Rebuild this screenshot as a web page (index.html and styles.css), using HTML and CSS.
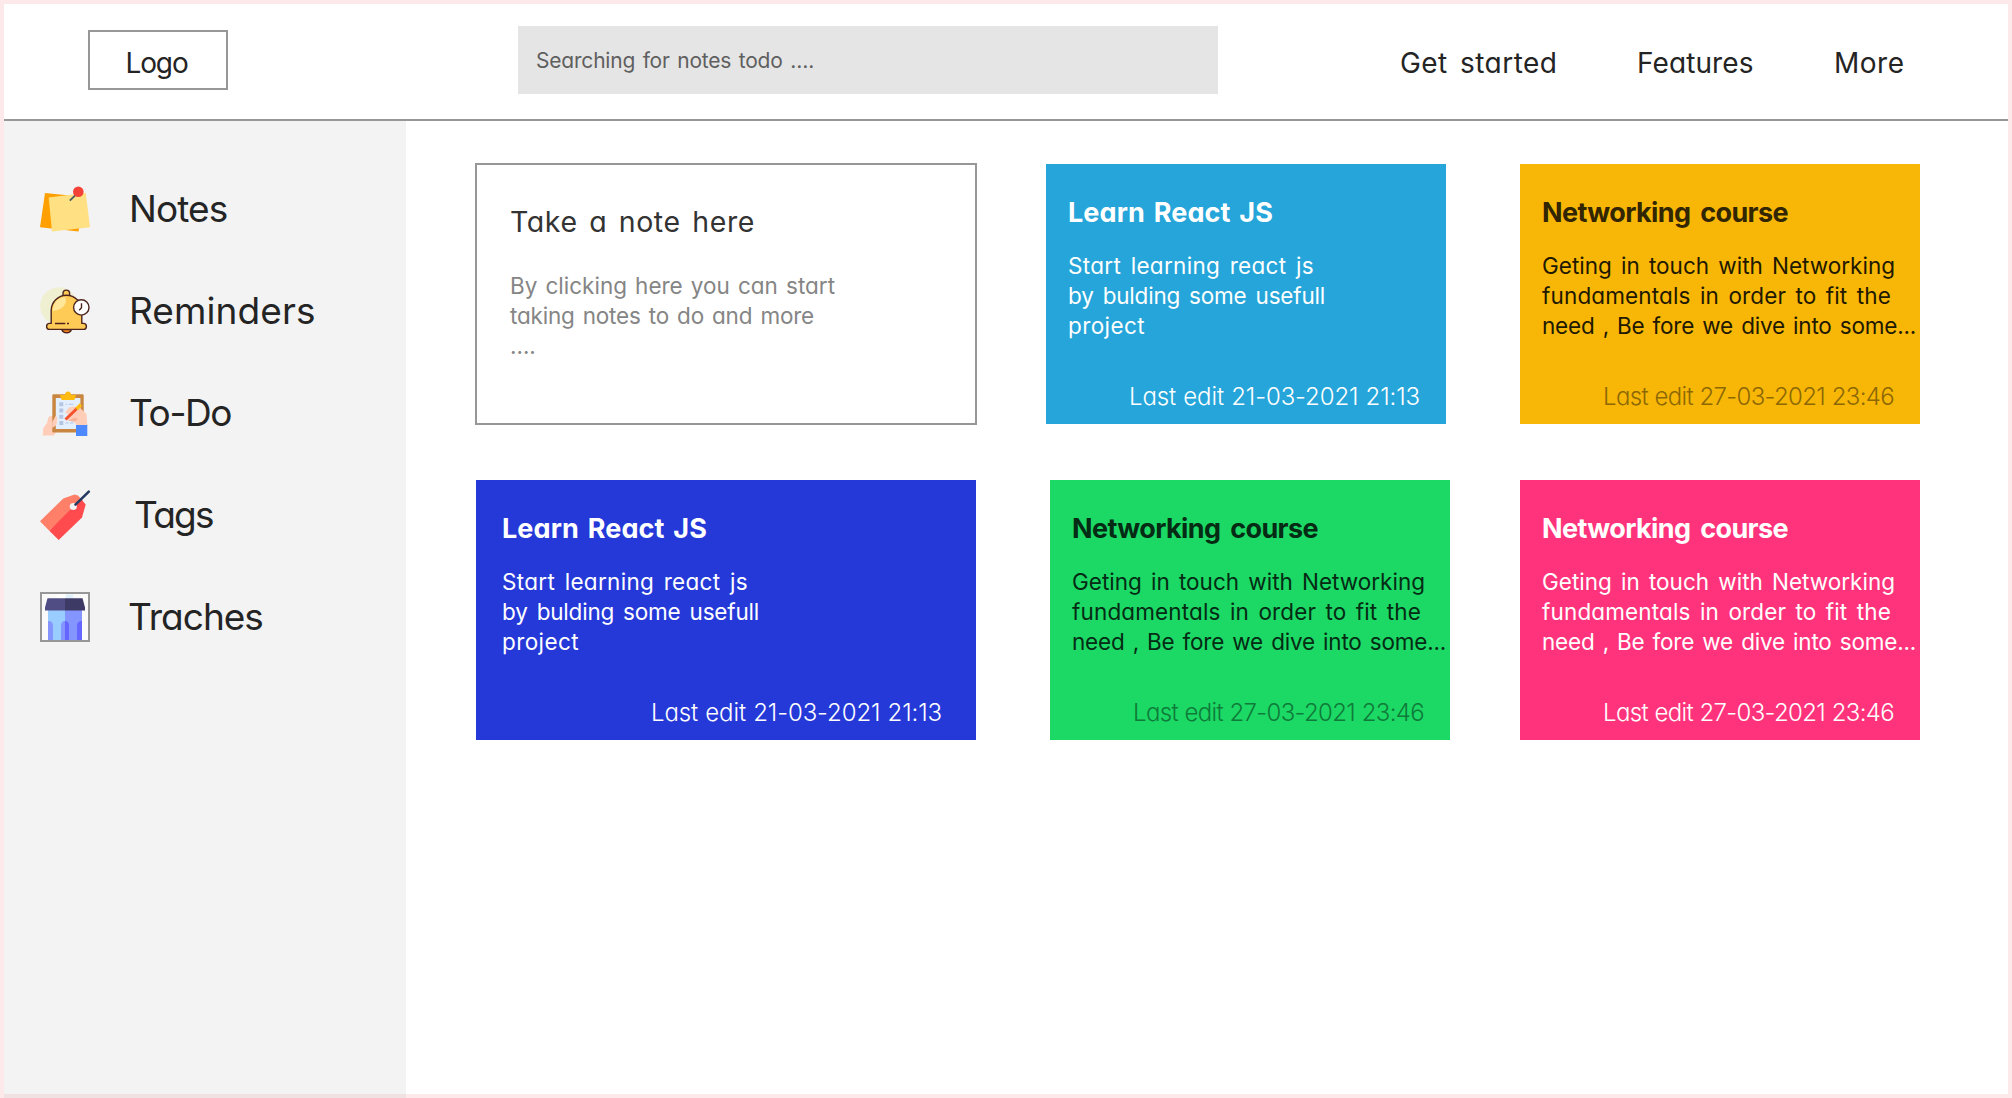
FILE: index.html
```html
<!DOCTYPE html>
<html lang="en">
<head>
<meta charset="utf-8">
<title>Notes</title>
<link rel="stylesheet" href="styles.css">
</head>
<body>
<div class="page">
  <header class="header">
    <a class="logo">Logo</a>
    <div class="search"><span class="line w-search">Searching for notes todo ….</span></div>
    <nav class="nav">
      <a class="nav-start">Get started</a>
      <a class="nav-features">Features</a>
      <a class="nav-more">More</a>
    </nav>
  </header>
  <div class="body">
    <aside class="sidebar">
      <a class="item">
        <svg class="icon" viewBox="0 0 50 50">
          <path fill="#ffa000" d="M5 9 45 13 38.5 47.4 0 43.3z"/>
          <path fill="#ffe082" d="M8.7 13.4 45.7 8.8 50 43.2 12 47.4z"/>
          <path stroke="#455a64" stroke-width="1.8" d="M29.8 16.6 37 9.6"/>
          <circle cx="38.3" cy="7.7" r="5.3" fill="#f44336"/>
        </svg>
        <span class="label l-notes">Notes</span>
      </a>
      <a class="item">
        <svg class="icon" viewBox="0 0 50 50">
          <circle cx="19" cy="20" r="18.8" fill="#eff0d2"/>
          <g stroke="#4c241d" stroke-width="1.4" stroke-linejoin="round">
            <path fill="#f58220" d="M21.8 43.5a5 4.6 0 0 0 9.6 0z"/>
            <path fill="#ffcb57" d="M23 9V7.4a3.3 3.3 0 0 1 6.6 0V9"/>
            <path fill="#ffcb57" d="M11.2 37.4V24.5a15.3 15.3 0 0 1 30.6 0v12.9h1.6a2.9 2.9 0 0 1 0 6H9.6a2.9 2.9 0 0 1 0-6z"/>
            <path fill="none" d="M15 37.5h10.3M27 37.5h2"/>
            <circle cx="41.3" cy="21.4" r="7.7" fill="#fff"/>
            <path fill="none" d="M41.5 17.3v4.4l-2.3 2.5"/>
          </g>
          <path fill="#ffe699" d="M13 25c-.5-7 4-13.500 12-14 3 5-1 13-12 14z"/>
        </svg>
        <span class="label l-reminders">Reminders</span>
      </a>
      <a class="item">
        <svg class="icon" viewBox="0 0 50 50">
          <path fill="#ffcdb8" d="M2.700 47.500 3.300 40 7 35 8.500 29 14 27 17 30 17 42 14 47.500z"/>
          <rect x="12.300" y="6.300" width="31.400" height="38.200" rx="1.200" fill="#c88640"/>
          <rect x="15.800" y="10" width="24.600" height="31" fill="#e4effd"/>
          <path fill="#ffbb10" d="M20 7h5a3 3.600 0 0 1 6 0h5l-1.500 5h-13z"/>
          <g fill="#b4c5e4">
            <path d="M19.300 14.200h4v4h-4zM19.300 20.500h4v4h-4zM19.300 26.700h4v4h-4zM19.300 33h4v4h-4z"/>
            <path d="M25.500 15.700h1.500v1h-1.500zM28.500 15.700h5v1h-5zM25.500 34.500h3v1h-3zM30 34.500h3.500v1h-3.500z"/>
          </g>
          <path fill="#ffcdb8" d="M12.300 34 15.500 28 17.500 29.500 16.500 37 12.300 40z"/>
          <path fill="#ffcdb8" d="M25 24.500 29 19.500 34 18.500 40 20 46.500 26 47.300 37H36.500L34 33.500 28 32.500 27.500 30.500 31 28z"/>
          <path fill="#f5b39b" d="M28 32.500 35 29.500 38 31 34.500 33.700z"/>
          <path stroke="#f4512c" stroke-width="3" d="M25.500 31.500 37 20.500"/>
          <path stroke="#ffbb10" stroke-width="3.600" d="M36.500 21 41 16.600"/>
          <rect x="36" y="37" width="11.300" height="11" fill="#4d88ff"/>
        </svg>
        <span class="label l-todo">To-Do</span>
      </a>
      <a class="item">
        <svg class="icon" viewBox="0 0 50 50">
          <path fill="#ff7f68" d="M0 31.300 23.300 8.400 34.500 4.600 38 5.500 43 11 9.300 40.700z"/>
          <path fill="#ff4b4e" d="M9.300 40.700 41 9 45.700 14.500 42 27.500 18.700 50z"/>
          <circle cx="33.300" cy="16.500" r="3.600" fill="#f3f3f3"/>
          <path stroke="#243a60" stroke-width="2.600" stroke-linecap="round" d="M35.500 14.600 48.800 1.600"/>
        </svg>
        <span class="label l-tags">Tags</span>
      </a>
      <a class="item">
        <svg class="icon boxed" viewBox="2 2 46 46">
          <path fill="#fff" d="M2 2h46v46H2z" opacity=".55"/>
          <path fill="#fff" d="M16.500 2.500h9.500V6.500h-9.500z"/>
          <path fill="#dff1fa" d="M26 2.500h7V6.500h-7z"/>
          <path fill="#99ccff" d="M8 18h17v30H8z"/>
          <path fill="#8495ff" d="M25 18h17v30H25z"/>
          <path fill="#8495ff" d="M8 29q5 0 5 5v14H8zM25 29q-4 0-4 5v14h4z"/>
          <path fill="#6565ff" d="M25 29q4 0 4 5v14h-4zM42 29q-5 0-5 5v14h5z"/>
          <path fill="#504d84" d="M7.500 6.300H25v12.200H5v-3z"/>
          <path fill="#3d3a66" d="M25 6.300h17.500L45 15.500v3H25z"/>
        </svg>
        <span class="label l-traches">Traches</span>
      </a>
    </aside>
    <main class="main">
      <div class="row">
        <section class="card take">
          <h2 class="title"><span class="line w-take">Take a note here</span></h2>
          <p class="text">
            <span class="line w-by">By clicking here you can start</span>
            <span class="line w-taking">taking notes to do and more</span>
            <span class="line">….</span>
          </p>
        </section>
        <section class="card sky">
          <h2 class="title"><span class="line w-react">Learn React JS</span></h2>
          <p class="text">
            <span class="line w-start">Start learning react js</span>
            <span class="line w-build">by bulding some usefull</span>
            <span class="line last">project</span>
          </p>
          <time class="edit e-1">Last edit 21-03-2021 21:13</time>
        </section>
        <section class="card amber">
          <h2 class="title"><span class="line w-net">Networking course</span></h2>
          <p class="text">
            <span class="line w-geting">Geting in touch with Networking</span>
            <span class="line w-fund">fundamentals in order to fit the</span>
            <span class="line w-need">need , Be fore we dive into some...</span>
          </p>
          <time class="edit e-2">Last edit 27-03-2021 23:46</time>
        </section>
      </div>
      <div class="row second">
        <section class="card blue">
          <h2 class="title"><span class="line w-react">Learn React JS</span></h2>
          <p class="text">
            <span class="line w-start">Start learning react js</span>
            <span class="line w-build">by bulding some usefull</span>
            <span class="line last">project</span>
          </p>
          <time class="edit e-1">Last edit 21-03-2021 21:13</time>
        </section>
        <section class="card green">
          <h2 class="title"><span class="line w-net">Networking course</span></h2>
          <p class="text">
            <span class="line w-geting">Geting in touch with Networking</span>
            <span class="line w-fund">fundamentals in order to fit the</span>
            <span class="line w-need">need , Be fore we dive into some...</span>
          </p>
          <time class="edit e-2">Last edit 27-03-2021 23:46</time>
        </section>
        <section class="card pink">
          <h2 class="title"><span class="line w-net">Networking course</span></h2>
          <p class="text">
            <span class="line w-geting">Geting in touch with Networking</span>
            <span class="line w-fund">fundamentals in order to fit the</span>
            <span class="line w-need">need , Be fore we dive into some...</span>
          </p>
          <time class="edit e-2">Last edit 27-03-2021 23:46</time>
        </section>
      </div>
    </main>
  </div>
</div>
</body>
</html>
```

FILE: styles.css
```css
* { box-sizing: border-box; }

body {
  margin: 0;
  background: #fff;
  color: #242424;
  font-family: Inter, sans-serif;
  font-feature-settings: "cv11"; /* single-storey a */
}

.page {
  display: flex;
  flex-direction: column;
  height: 1098px;
  border: 4px solid #fde9e9;
  border-bottom: 0;
}

/* Header */
.header {
  display: flex;
  align-items: center;
  flex: none;
  height: 117px;
  padding: 0 0 3px 84px;
  border-bottom: 2px solid #979797;
}
.logo {
  display: flex;
  align-items: center;
  justify-content: center;
  width: 140px;
  height: 60px;
  padding: 5px 3px 0 0;
  border: 2px solid #979797;
  font-size: 28px;
  letter-spacing: -1.1px;
}
.search {
  display: flex;
  align-items: center;
  width: 700px;
  height: 68px;
  margin-left: 290px;
  padding: 1px 0 0 18px;
  background: #e5e5e5;
  color: #5f5f5f;
  font-size: 21px;
  letter-spacing: -0.2px;
}
.nav {
  display: flex;
  margin: 6px 0 0 182px;
  font-size: 28px;
  white-space: nowrap;
}
.nav a { flex: none; }
.nav-start { width: 237px; letter-spacing: 0.45px; word-spacing: 4px; }
.nav-features { width: 197px; letter-spacing: 0.1px; }
.nav-more { letter-spacing: 0.5px; }

/* A text line stretched to its own measure */
.line {
  display: block;
  white-space: nowrap;
}
.line[class*="w-"] { text-align-last: justify; white-space: normal; }
.w-search { width: 278px; }
.w-take { width: 245px; letter-spacing: 0.6px; }
.w-by { width: 325px; letter-spacing: 0; }
.w-taking { width: 304px; }
.w-react { width: 205px; letter-spacing: 0.1px; }
.w-start { width: 246px; letter-spacing: 0.3px; }
.w-build { width: 257px; }
.w-net { width: 246px; }
.w-geting { width: 353px; letter-spacing: 0; }
.w-fund { width: 349px; letter-spacing: 0.15px; }
.w-need { width: 374px; }
.last { letter-spacing: 0.4px; }

.body { display: flex; flex: 1; }

/* Sidebar */
.sidebar {
  display: flex;
  flex-direction: column;
  gap: 52px;
  flex: none;
  width: 402px;
  padding: 63px 0 0 36px;
  background: #f3f3f3;
  border-bottom: 4px solid #f0e2e2;
}
.item { display: flex; align-items: center; height: 50px; }
.icon { flex: none; width: 50px; height: 50px; fill: none; overflow: visible; }
.boxed { border: 2px solid #979797; overflow: hidden; }
.label { font-size: 37px; line-height: 50px; }
.l-notes { margin-left: 39px; letter-spacing: -0.9px; }
.l-reminders { margin-left: 39px; letter-spacing: 0.1px; }
.l-todo { margin-left: 39px; letter-spacing: -1.4px; }
.l-tags { margin-left: 44px; letter-spacing: -1.8px; }
.l-traches { margin-left: 38px; letter-spacing: -1px; }

/* Notes */
.main {
  flex: 1;
  padding: 42px 0 0 69px;
  border-bottom: 4px solid #fde9e9;
}
.row { display: flex; align-items: center; }
.second { margin-top: 55px; padding-left: 1px; }
.card {
  display: flex;
  flex-direction: column;
  flex: none;
  width: 400px;
  height: 260px;
  padding: 33px 0 0 22px;
}
.title {
  margin: 0;
  font-size: 27px;
  line-height: 32px;
  font-weight: 700;
  letter-spacing: -0.6px;
}
.text {
  margin: 22px 0 0;
  font-size: 22.5px;
  line-height: 30px;
  letter-spacing: -0.2px;
}
.edit {
  width: 291px;
  margin: 41px 26px 0 auto;
  font-size: 24px;
  line-height: 30px;
  font-weight: 300;
  text-align-last: justify;
}
.e-1 { letter-spacing: -0.1px; }
.e-2 { letter-spacing: -0.65px; }

.take {
  width: 502px;
  height: 262px;
  padding: 40px 0 0 33px;
  border: 2px solid #979797;
}
.take .title {
  color: #333;
  font-size: 28.5px;
  line-height: 34px;
  font-weight: 400;
}
.take .text { margin-top: 32px; color: #858585; }

.sky { margin-left: 69px; background: #25a5d9; color: #fff; }
.amber { margin-left: 74px; background: #f8b707; color: #322501; }
.amber .text { color: #211800; }
.amber .edit { color: #8c6704; }
.blue { width: 500px; padding-left: 26px; background: #2539d9; color: #fff; }
.blue .edit { margin-right: 34px; }
.green { margin-left: 74px; background: #1bd964; color: #052b14; }
.green .edit { color: #0f7a39; }
.pink { margin-left: 70px; background: #ff337c; color: #fff; }
```
